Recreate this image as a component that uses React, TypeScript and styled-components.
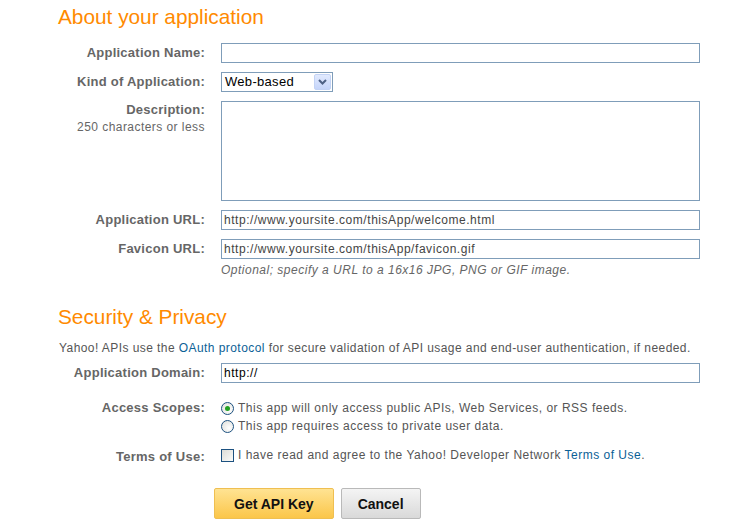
import React from "react";
import styled, { createGlobalStyle } from "styled-components";

const Global = createGlobalStyle`
  html, body { margin: 0; padding: 0; background: #fff; }
  body { font-family: "Liberation Sans", Arial, sans-serif; color: #555; }
`;

const Page = styled.div`
  width: 755px;
  height: 526px;
  box-sizing: border-box;
  padding: 5px 0 0 58px;
  overflow: hidden;
`;

const Heading = styled.h2<{ $top?: number }>`
  margin: ${(p) => p.$top ?? 0}px 0 0 0;
  font-size: 20.8px;
  line-height: 24px;
  font-weight: normal;
  color: #ff8a00;
`;

const Form = styled.div<{ $top: number }>`
  display: grid;
  grid-template-columns: 147px 479px;
  column-gap: 16px;
  row-gap: 9px;
  margin-top: ${(p) => p.$top}px;
  align-items: start;
`;

const Label = styled.div<{ $pad?: number; $top?: number }>`
  text-align: right;
  font-size: 13px;
  font-weight: bold;
  color: #666;
  line-height: 16px;
  letter-spacing: 0.25px;
  padding-top: ${(p) => p.$pad ?? 2}px;
  margin-top: ${(p) => p.$top ?? 0}px;
`;

const Sub = styled.div`
  font-weight: normal;
  font-size: 12px;
  color: #666;
  line-height: 18px;
  letter-spacing: 0.45px;
`;

const Input = styled.input<{ $dark?: boolean }>`
  box-sizing: border-box;
  width: 479px;
  height: 20px;
  border: 1px solid #7f9db9;
  padding: 0 2px;
  margin: 0;
  font-family: "Liberation Sans", Arial, sans-serif;
  font-size: 12px;
  letter-spacing: 0.55px;
  color: ${(p) => (p.$dark ? "#000" : "#444")};
  background: #fff;
  outline: none;
`;

const Area = styled.textarea`
  box-sizing: border-box;
  width: 479px;
  height: 100px;
  border: 1px solid #7f9db9;
  margin: 0;
  padding: 2px;
  resize: none;
  display: block;
  outline: none;
`;

const Select = styled.div`
  box-sizing: border-box;
  width: 112px;
  height: 20px;
  border: 1px solid #7f9db9;
  display: flex;
  align-items: stretch;
  padding: 1px;
  font-size: 13px;
  letter-spacing: 0.3px;
  color: #000;
`;

const SelectText = styled.div`
  flex: 1;
  line-height: 16px;
  padding-left: 2px;
`;

const Arrow = styled.div`
  width: 15px;
  border: 1px solid #c3d3f5;
  border-radius: 2px;
  background: linear-gradient(#e1eafe, #c5d5fa);
  display: flex;
  align-items: center;
  justify-content: center;
`;

const Field = styled.div`
  display: flex;
  flex-direction: column;
`;

const Note = styled.div`
  font-size: 12px;
  font-style: italic;
  color: #666;
  line-height: 16px;
  letter-spacing: 0.5px;
  margin-top: 3px;
`;

const Para = styled.p`
  margin: 11px 0 0 1px;
  font-size: 12px;
  line-height: 16px;
  color: #555;
  letter-spacing: 0.43px;
  white-space: nowrap;
`;

const Link = styled.a`
  color: #0b6196;
  text-decoration: none;
`;

const Options = styled.div<{ $top?: number }>`
  display: flex;
  flex-direction: column;
  gap: 2px;
  padding-top: 1px;
  margin-top: ${(p) => p.$top ?? 0}px;
`;

const Option = styled.label`
  display: flex;
  align-items: center;
  gap: 4px;
  font-size: 12px;
  line-height: 16px;
  letter-spacing: 0.5px;
  color: #555;
  white-space: nowrap;
`;

const Radio = styled.span<{ $on?: boolean }>`
  box-sizing: border-box;
  width: 13px;
  height: 13px;
  border-radius: 50%;
  border: 1px solid #1c5180;
  background: radial-gradient(circle at 65% 65%, #fff 0%, #e4e4e0 80%);
  display: flex;
  align-items: center;
  justify-content: center;
  flex: none;
  &::after {
    content: "";
    width: 5px;
    height: 5px;
    border-radius: 50%;
    background: ${(p) => (p.$on ? "#21a121" : "transparent")};
  }
`;

const Check = styled.span`
  box-sizing: border-box;
  width: 13px;
  height: 13px;
  border: 1px solid #1c5180;
  background: linear-gradient(135deg, #dcdcd7, #fbfbf9);
  flex: none;
`;

const Buttons = styled.div`
  display: flex;
  gap: 7px;
  margin: 23px 0 0 156px;
`;

const Button = styled.button<{ $primary?: boolean }>`
  box-sizing: border-box;
  height: 31px;
  padding: 0 ${(p) => (p.$primary ? 19 : 16)}px;
  border: 1px solid ${(p) => (p.$primary ? "#efbf51" : "#b9b9b9")};
  border-radius: 2px;
  background: ${(p) =>
    p.$primary
      ? "linear-gradient(#ffe392, #fbc64a)"
      : "linear-gradient(#f4f4f4, #d9d9d9)"};
  font-family: "Liberation Sans", Arial, sans-serif;
  font-size: 14px;
  font-weight: bold;
  color: #111;
  cursor: pointer;
`;

export default function App() {
  return (
    <Page>
      <Global />
      <Heading>About your application</Heading>
      <Form $top={14}>
        <Label>Application Name:</Label>
        <Input defaultValue="" />
        <Label>Kind of Application:</Label>
        <Select>
          <SelectText>Web-based</SelectText>
          <Arrow>
            <svg width="9" height="6" viewBox="0 0 9 6">
              <path d="M1 1 L4.5 4.5 L8 1" fill="none" stroke="#4d6185" strokeWidth="2" />
            </svg>
          </Arrow>
        </Select>
        <Label $pad={1}>
          Description:
          <Sub>250 characters or less</Sub>
        </Label>
        <Area />
        <Label>Application URL:</Label>
        <Input defaultValue="http://www.yoursite.com/thisApp/welcome.html" />
        <Label>Favicon URL:</Label>
        <Field>
          <Input defaultValue="http://www.yoursite.com/thisApp/favicon.gif" />
          <Note>Optional; specify a URL to a 16x16 JPG, PNG or GIF image.</Note>
        </Field>
      </Form>
      <Heading $top={27}>Security &amp; Privacy</Heading>
      <Para>
        Yahoo! APIs use the <Link href="#">OAuth protocol</Link> for secure validation of API usage and
        end-user authentication, if needed.
      </Para>
      <Form $top={7}>
        <Label>Application Domain:</Label>
        <Input defaultValue="http://" $dark />
      </Form>
      <Form $top={16}>
        <Label $pad={1}>Access Scopes:</Label>
        <Options>
          <Option>
            <Radio $on />
            <span>This app will only access public APIs, Web Services, or RSS feeds.</span>
          </Option>
          <Option>
            <Radio />
            <span>This app requires access to private user data.</span>
          </Option>
        </Options>
        <Label $pad={3} $top={3}>Terms of Use:</Label>
        <Options $top={3}>
          <Option>
            <Check />
            <span>
              I have read and agree to the Yahoo! Developer Network <Link href="#">Terms of Use</Link>.
            </span>
          </Option>
        </Options>
      </Form>
      <Buttons>
        <Button $primary>Get API Key</Button>
        <Button>Cancel</Button>
      </Buttons>
    </Page>
  );
}
